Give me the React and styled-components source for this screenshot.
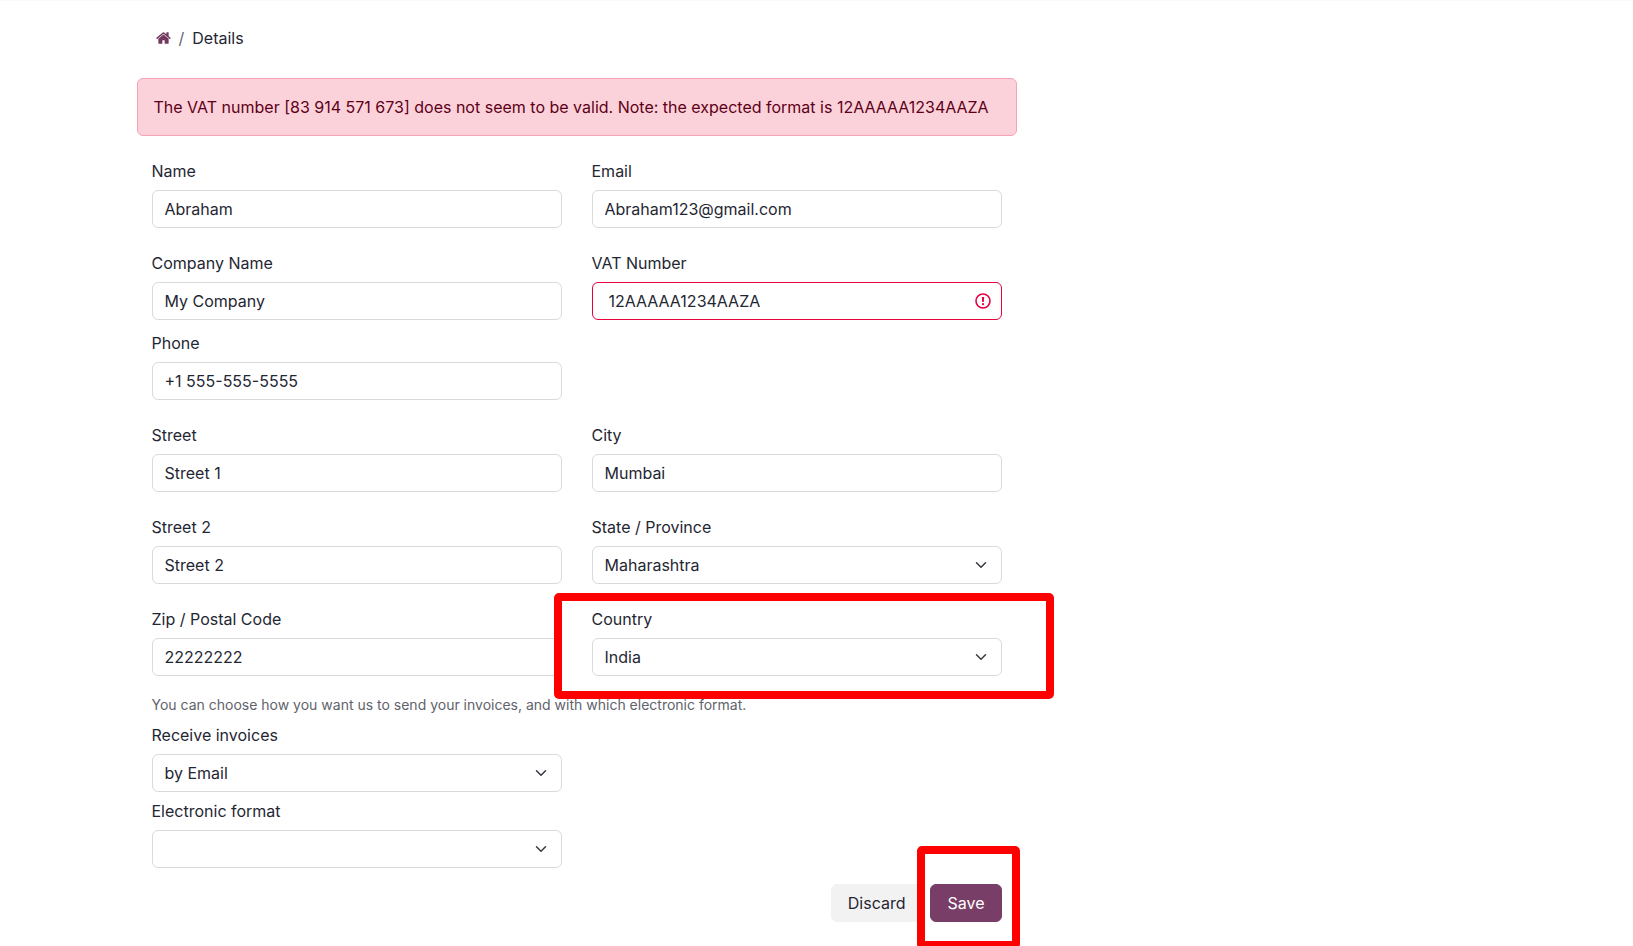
import React from "react";
import styled, { createGlobalStyle, css } from "styled-components";

const GlobalStyle = createGlobalStyle`
  *, *::before, *::after {
    box-sizing: border-box;
  }
  body {
    margin: 0;
    background: #fff;
    color: #1f2733;
    font-family: Inter, "Liberation Sans", sans-serif;
    font-size: 16px;
    line-height: 24px;
  }
`;

function HomeIcon() {
  return (
    <svg width="15" height="16" viewBox="64 0 1664 1792" fill="currentColor" aria-hidden="true">
      <path d="M1472 992v480q0 26-19 45t-45 19h-384v-384h-256v384h-384q-26 0-45-19t-19-45v-480q0-1 .5-3t.5-3l575-474 575 474q1 2 1 6zm223-69l-62 74q-8 9-21 11h-3q-13 0-21-7l-692-577-692 577q-12 8-24 7-13-2-21-11l-62-74q-8-10-7-23.5t11-21.5l719-599q32-26 76-26t76 26l244 204v-195q0-14 9-23t23-9h192q14 0 23 9t9 23v408l219 182q10 8 11 21.5t-7 23.5z" />
    </svg>
  );
}

function TextField({ id, label, type = "text", value, invalid }) {
  return (
    <Field>
      <Label htmlFor={id}>{label}</Label>
      <Control>
        <Input id={id} type={type} defaultValue={value} $invalid={invalid} aria-invalid={invalid} />
        {invalid && (
          <ErrorIcon width="16" height="16" viewBox="0 0 16 16" aria-hidden="true">
            <circle cx="8" cy="8" r="7" fill="none" stroke="currentColor" strokeWidth="1.6" />
            <path d="M6.9 4h2.2l-.3 5H7.2z" fill="currentColor" />
            <circle cx="8" cy="11.2" r="1.1" fill="currentColor" />
          </ErrorIcon>
        )}
      </Control>
    </Field>
  );
}

function SelectField({ id, label, options, highlighted }) {
  return (
    <Field>
      <Label htmlFor={id}>{label}</Label>
      <Control>
        <Select id={id}>
          {options.map((option) => (
            <option key={option}>{option}</option>
          ))}
        </Select>
        <Chevron width="12" height="12" viewBox="0 0 16 16" aria-hidden="true">
          <path d="M2 5l6 6 6-6" />
        </Chevron>
      </Control>
      {highlighted && <CountryHighlight />}
    </Field>
  );
}

function App() {
  return (
    <Page>
      <GlobalStyle />
      <Container>
        <Content>
          <Breadcrumb aria-label="Breadcrumb">
            <HomeLink href="#" aria-label="Home">
              <HomeIcon />
            </HomeLink>
            <Separator>/</Separator>
            <span>Details</span>
          </Breadcrumb>

          <Alert role="alert">
            The VAT number [83 914 571 673] does not seem to be valid. Note: the expected format is
            12AAAAA1234AAZA
          </Alert>

          <Form onSubmit={(e) => e.preventDefault()}>
            <Row $gap={23}>
              <TextField id="name" label="Name" value="Abraham" />
              <TextField id="email" label="Email" type="email" value="Abraham123@gmail.com" />
            </Row>
            <Row $gap={11}>
              <TextField id="company" label="Company Name" value="My Company" />
              <TextField id="vat" label="VAT Number" value="12AAAAA1234AAZA" invalid />
            </Row>
            <Row $gap={23}>
              <TextField id="phone" label="Phone" type="tel" value="+1 555-555-5555" />
            </Row>
            <Row $gap={23}>
              <TextField id="street" label="Street" value="Street 1" />
              <TextField id="city" label="City" value="Mumbai" />
            </Row>
            <Row $gap={23}>
              <TextField id="street2" label="Street 2" value="Street 2" />
              <SelectField id="state" label="State / Province" options={["Maharashtra"]} />
            </Row>
            <Row $gap={18}>
              <TextField id="zip" label="Zip / Postal Code" value="22222222" />
              <SelectField id="country" label="Country" options={["India"]} highlighted />
            </Row>
            <Hint>
              You can choose how you want us to send your invoices, and with which electronic format.
            </Hint>
            <Row $gap={7}>
              <SelectField id="sending" label="Receive invoices" options={["by Email"]} />
            </Row>
            <Row $gap={16}>
              <SelectField id="format" label="Electronic format" options={[""]} />
            </Row>

            <Actions>
              <Button type="button">Discard</Button>
              <SaveWrap>
                <Button type="submit" $primary>
                  Save
                </Button>
                <SaveHighlight />
              </SaveWrap>
            </Actions>
          </Form>
        </Content>
      </Container>
    </Page>
  );
}

const Page = styled.div`
  overflow: hidden;
  border-top: 1px solid #fafaf7;
  padding: 25px 16px 24px;
`;

const Container = styled.div`
  max-width: 1360px;
  margin: 0 auto;
`;

const Content = styled.main`
  max-width: 880px;
`;

const Breadcrumb = styled.nav`
  display: flex;
  align-items: center;
  gap: 8px;
  padding: 0 19px;
  margin-bottom: 28px;
`;

const HomeLink = styled.a`
  display: flex;
  color: #71395f;
`;

const Separator = styled.span`
  color: #5f6670;
`;

const Alert = styled.div`
  padding: 16px;
  margin-bottom: 23px;
  border: 1px solid #f8a3b3;
  border-radius: 6px;
  background: #fcd2da;
  color: #5c0018;
`;

const Form = styled.form`
  padding: 0 15px;
`;

const Row = styled.div`
  display: grid;
  grid-template-columns: 1fr 1fr;
  column-gap: 30px;
  margin-bottom: ${(props) => props.$gap}px;
`;

const Field = styled.div`
  position: relative;
`;

const Label = styled.label`
  display: block;
  margin-bottom: 7px;
`;

const Control = styled.div`
  position: relative;
`;

const controlStyle = css`
  display: block;
  width: 100%;
  height: 38px;
  border: 1px solid #d8dadd;
  border-radius: 6px;
  padding: 6px 12px;
  background: #fff;
  color: inherit;
  font: inherit;
`;

const Input = styled.input`
  ${controlStyle}
  ${(props) =>
    props.$invalid &&
    css`
      border-color: #e6003c;
      padding: 6px 38px 6px 16px;
    `}
`;

const Select = styled.select`
  ${controlStyle}
  appearance: none;
`;

const ErrorIcon = styled.svg`
  position: absolute;
  top: 11px;
  right: 11px;
  color: #e6003c;
`;

const Chevron = styled.svg`
  position: absolute;
  top: 13px;
  right: 15px;
  fill: none;
  stroke: #343a40;
  stroke-width: 2;
  stroke-linecap: round;
  stroke-linejoin: round;
  pointer-events: none;
`;

const Hint = styled.p`
  margin: 0 0 8px;
  color: #5f636b;
  font-size: 14px;
  line-height: 21px;
`;

const Actions = styled.div`
  display: flex;
  justify-content: flex-end;
  gap: 8px;
`;

const Button = styled.button`
  height: 38px;
  border: 1px solid ${(props) => (props.$primary ? "#783e67" : "#f3f2f2")};
  border-radius: 6px;
  padding: 6px 16px;
  background: ${(props) => (props.$primary ? "#783e67" : "#f3f2f2")};
  color: ${(props) => (props.$primary ? "#fff" : "inherit")};
  font: inherit;
  cursor: pointer;
`;

const SaveWrap = styled.div`
  position: relative;
`;

const Highlight = styled.div`
  position: absolute;
  border: 8px solid #ff0000;
  border-radius: 5px;
  pointer-events: none;
  z-index: 1;
`;

const CountryHighlight = styled(Highlight)`
  inset: -14px -52px -23px -38px;
`;

const SaveHighlight = styled(Highlight)`
  inset: -38px -18px -27px -13px;
`;

export default App;
